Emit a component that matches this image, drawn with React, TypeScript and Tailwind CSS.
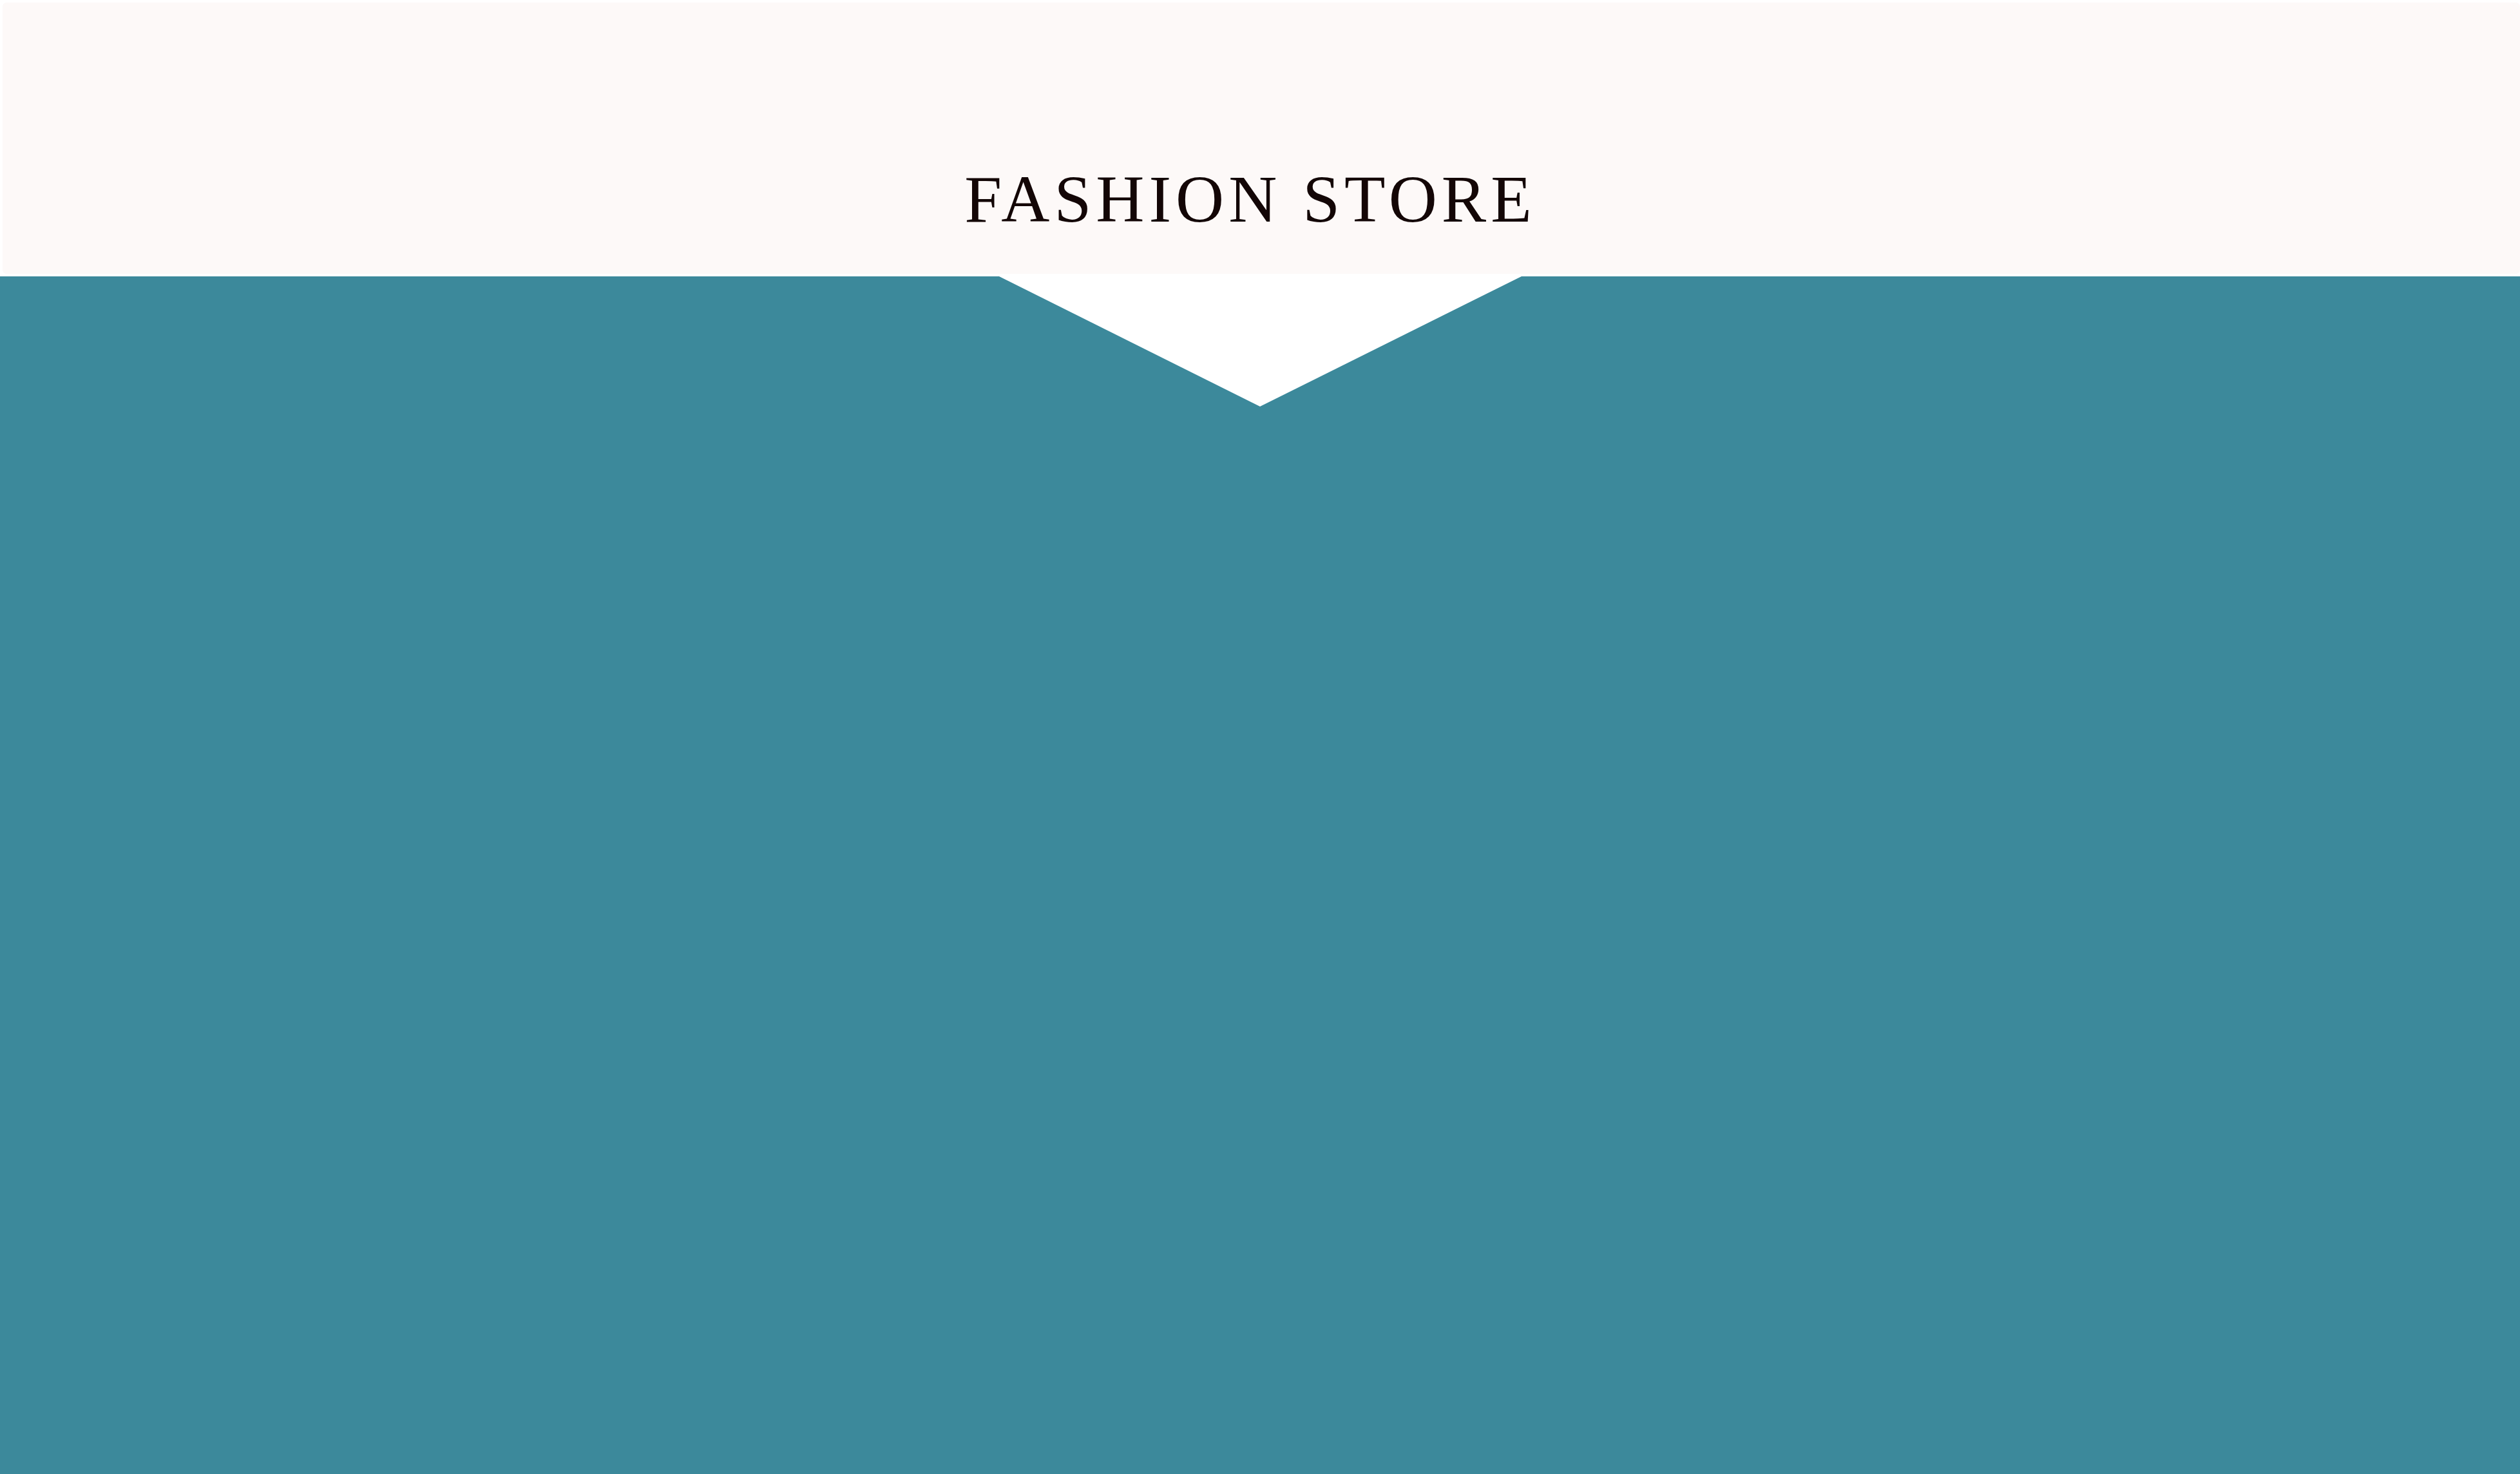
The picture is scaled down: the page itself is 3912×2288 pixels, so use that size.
const App = () => {
  return (
    <div className="min-h-screen w-full flex flex-col bg-[#3c899b]">
      {/* header */}
      <div className="bg-white pt-[4px] pl-[4px] pb-[4px]">
        <div className="h-[421px] rounded-[6px] bg-[#fdf9f8] flex justify-center pt-[253px] pr-[34px]">
          <h1 className="text-[104px] leading-none tracking-[7px] text-[#130606] font-['Liberation_Serif',serif] font-normal">
            FASHION STORE
          </h1>
        </div>
      </div>

      {/* body */}
      <div className="flex-1 flex flex-col items-center">
        <svg width="811" height="202" viewBox="0 0 811 202" className="block">
          <polygon points="0,0 811,0 405,202" fill="#ffffff" />
        </svg>
      </div>
    </div>
  )
}

export default App
